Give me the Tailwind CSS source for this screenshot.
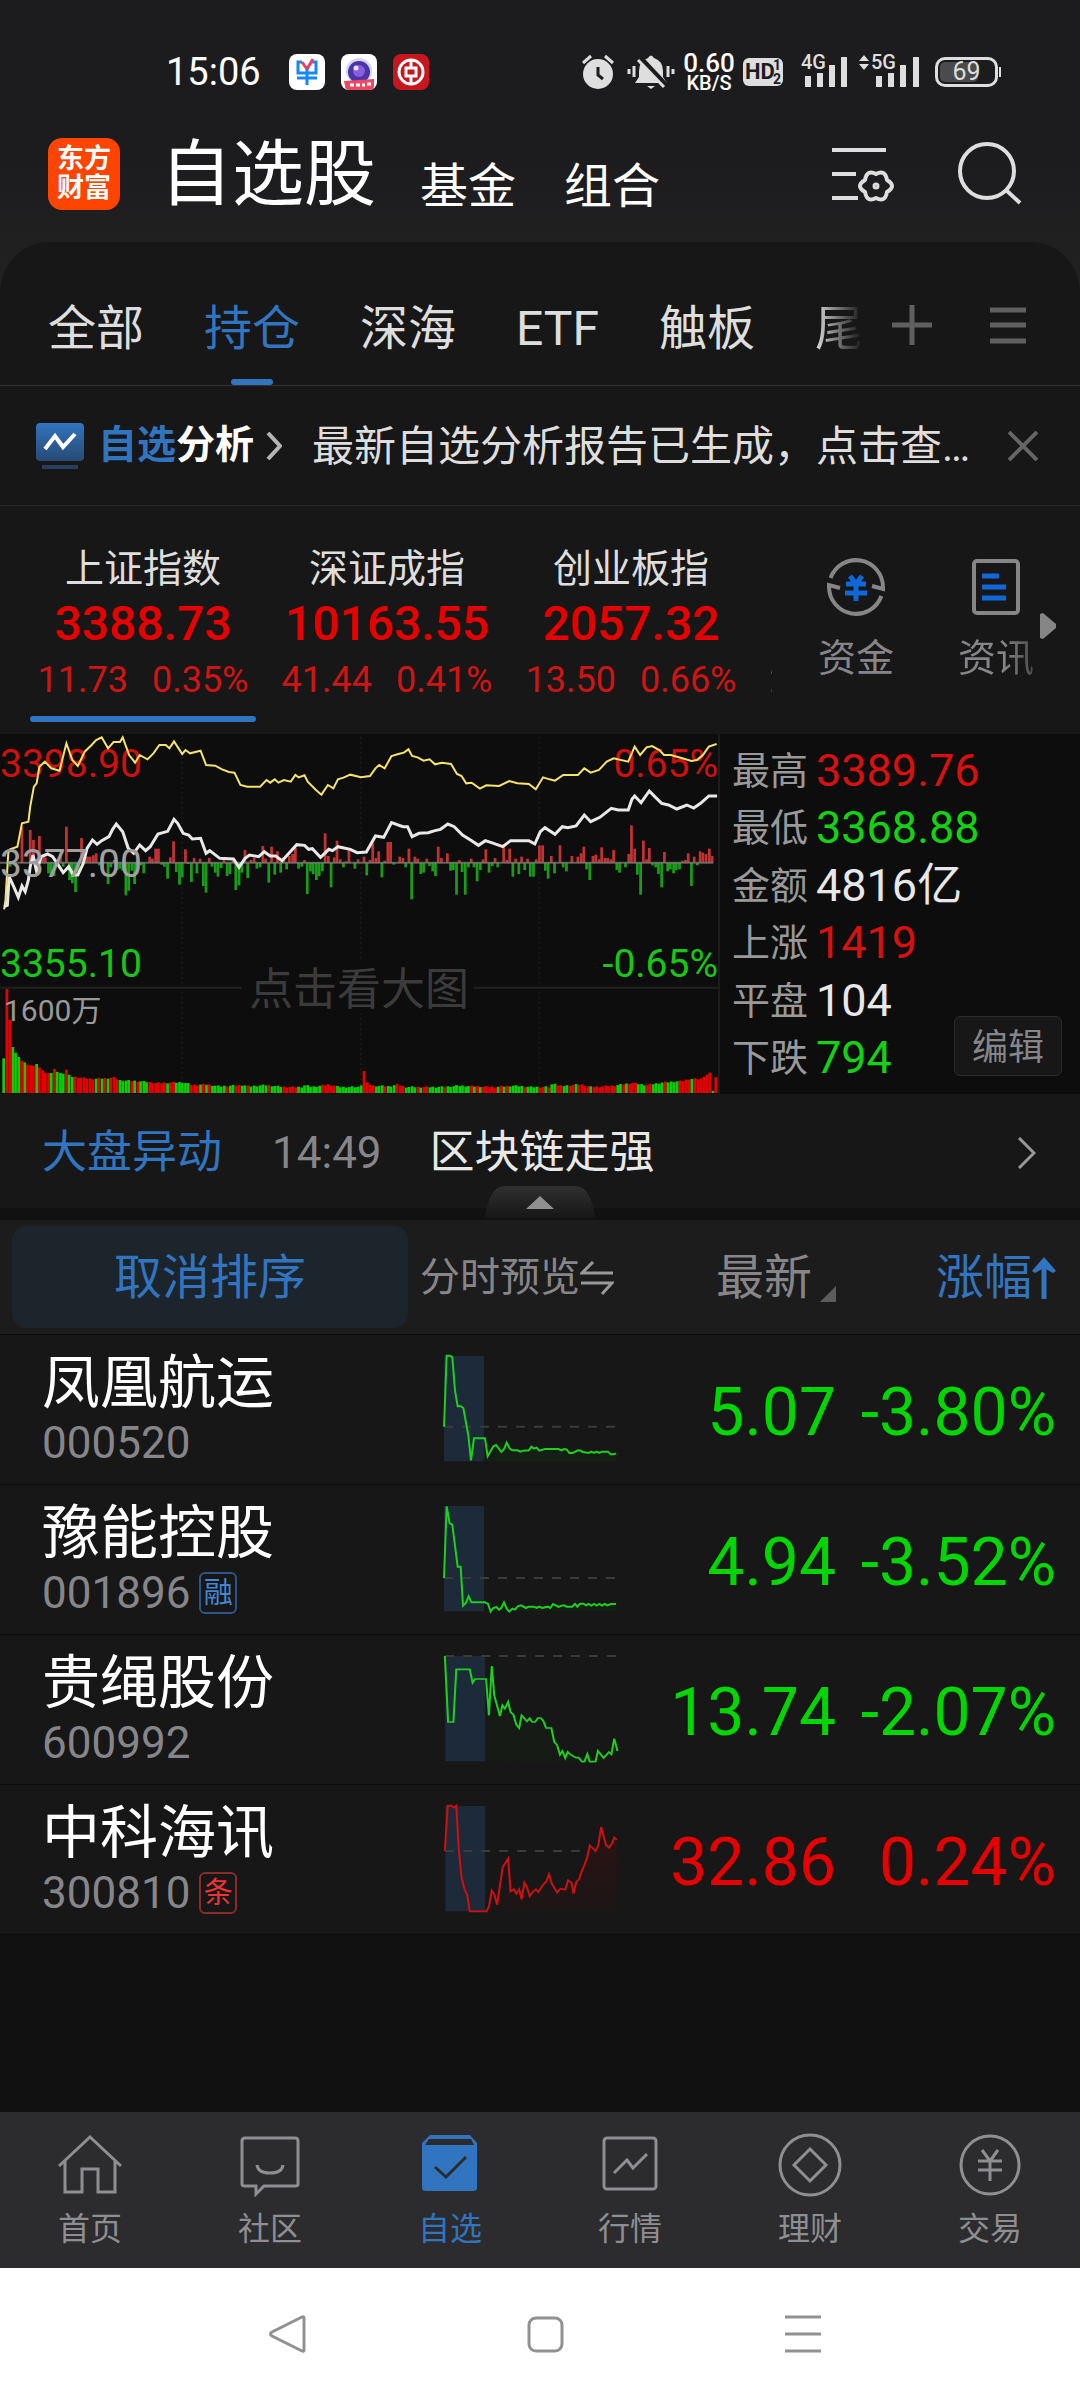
<!DOCTYPE html>
<html lang="zh-CN">
<head>
<meta charset="utf-8">
<meta name="viewport" content="width=device-width, initial-scale=1">
<title>自选股</title>
<script src="https://cdn.jsdelivr.net/npm/@tailwindcss/browser@4"></script>
</head>
<body class="flex min-h-screen flex-col bg-[#111111] font-[Roboto,'Noto_Sans_CJK_SC',sans-serif] text-[#dedede]">

<div class="bg-linear-to-b from-[#1c1c1e] from-40% to-[#262626]">
  <!-- Status bar -->
  <div class="flex h-[138px] items-center justify-between pt-1.5 pr-[82px] pl-[166px] text-white">
    <div class="flex items-center">
      <span class="text-[38px] leading-none">15:06</span>
      <div class="ml-7 flex gap-4">
        <svg class="size-9" viewBox="0 0 36 36" fill="none"><rect width="36" height="36" rx="8" fill="#fff"/><path d="M13 8H9v11h18V8h-4" stroke="#1689f0" stroke-width="3"/><path d="M13 8l5 7 6-10" stroke="#f03d62" stroke-width="3"/><path d="M8 24h20M18 15v16" stroke="#1689f0" stroke-width="3"/></svg>
        <svg class="size-9" viewBox="0 0 36 36"><rect width="36" height="36" rx="8" fill="#fff"/><circle cx="18" cy="17" r="13" fill="#d9d4ee"/><circle cx="18" cy="18" r="11" fill="#4b34a6"/><circle cx="18" cy="17" r="6" fill="#8a5de0"/><circle cx="15" cy="14" r="2.500" fill="#e8dcff"/><path d="M3 27l30-2v7q0 4-4 4H8q-4 0-4-4z" fill="#ee4761"/><path d="M9 31h4m2 0h4m2 0h3m2-1h4" stroke="#fff" stroke-width="3"/></svg>
        <svg class="size-9" viewBox="0 0 36 36" fill="none"><rect width="36" height="36" rx="8" fill="#c8161f"/><circle cx="18" cy="18" r="12" stroke="#fff" stroke-width="3"/><rect x="13" y="14" width="10" height="8" stroke="#fff" stroke-width="3"/><path d="M18 6v8m0 8v8" stroke="#fff" stroke-width="3"/></svg>
      </div>
    </div>
    <div class="flex items-center text-[#dedede]">
      <svg class="h-9 w-[34px]" viewBox="0 0 34 36" fill="none"><circle cx="17" cy="20" r="15" fill="#dedede"/><path d="M2 9l8-7M32 9l-8-7" stroke="#dedede" stroke-width="3"/><path d="M17 13v8l5 4" stroke="#1c1c1e" stroke-width="3"/></svg>
      <svg class="ml-3 h-9 w-12" viewBox="0 0 48 36" fill="none"><path d="M21 4q3-5 6 0q9 3 9 13v6l4 6H8l4-6v-6q0-10 9-13z" fill="#dedede"/><path d="M20 32h8l-4 3z" fill="#dedede"/><path d="M12 3l28 30" stroke="#1c1c1e" stroke-width="6"/><path d="M11 6l26 27" stroke="#dedede" stroke-width="3"/><path d="M2 15v5M7 12v11M41 12v11M46 15v5" stroke="#dedede" stroke-width="3"/></svg>
      <div class="ml-2 flex w-[52px] flex-col items-center font-medium text-white"><span class="text-[26px] leading-[22px]">0.60</span><span class="text-[20px] leading-[18px]">KB/S</span></div>
      <div class="relative ml-2 h-7 w-10 rounded-md bg-[#dedede] pl-0.5 text-[22px] leading-7 font-bold text-[#1c1c1e]">HD<span class="absolute top-0 right-0.5 text-[14px] leading-[15px]">1</span><span class="absolute right-0.5 bottom-0 text-[14px] leading-[14px]">2</span></div>
      <div class="relative ml-[18px] h-9 w-[46px]"><span class="absolute top-0 left-0 text-[20px] leading-4 font-medium">4G</span><svg class="size-full" viewBox="0 0 46 36"><path d="M4 22h6v11H4zM16 19h6v14h-6zM28 11h6v22h-6zM40 3h6v30h-6z" fill="#dedede"/></svg></div>
      <div class="relative ml-3 h-9 w-[60px]"><span class="absolute top-0 left-3 text-[20px] leading-4 font-medium">5G</span><svg class="size-full" viewBox="0 0 60 36"><path d="M0 7l5-6 5 6zM0 10l5 6 5-6zM17 22h6v11h-6zM29 19h6v14h-6zM41 11h6v22h-6zM54 3h6v30h-6z" fill="#dedede"/></svg></div>
      <div class="relative ml-4 h-[30px] w-[63px] rounded-[10px] border-3 border-[#dedede] p-0.5"><div class="h-full w-[38px] rounded-[5px] bg-[#4b4b4d]"></div><span class="absolute inset-0 text-center text-[25px] leading-6">69</span><span class="absolute top-[7px] -right-1.5 h-2.5 w-0.5 bg-[#dedede]"></span></div>
    </div>
  </div>

  <!-- App header -->
  <header class="flex h-[104px] items-end justify-between pr-[58px] pb-8 pl-12">
    <div class="flex items-end text-white">
      <div class="flex size-[72px] flex-col items-center justify-center rounded-[14px] bg-[#ff4400] text-[27px] leading-[29px] font-bold"><span>东方</span><span>财富</span></div>
      <h1 class="ml-10 text-[72px] leading-[70px]">自选股</h1>
      <a href="#" class="ml-11 text-[48px] leading-[46px]">基金</a>
      <a href="#" class="ml-12 text-[48px] leading-[46px]">组合</a>
    </div>
    <div class="flex gap-16">
      <button aria-label="设置"><svg class="h-[72px] w-16" viewBox="0 0 64 72" fill="none" stroke="#dedede" stroke-width="4"><path d="M2 12h54M2 36h24M2 60h26"/><path d="M57 54Q55 65 46 60Q37 65 35 54Q25 48 35 42Q37 31 46 36Q55 31 57 42Q67 48 57 54Z" stroke-linejoin="round"/><circle cx="46" cy="48" r="1.500"/></svg></button>
      <button aria-label="搜索"><svg class="h-[72px] w-16" viewBox="0 0 64 72" fill="none" stroke="#dedede" stroke-width="4"><circle cx="29" cy="33" r="27"/><path d="M48 52l14 13"/></svg></button>
    </div>
  </header>

  <!-- Group tabs -->
  <nav class="flex h-36 items-end justify-between rounded-t-[50px] border-b border-[#303030] bg-[#171717] pr-[52px] pl-12 text-[48px] leading-[48px]">
    <div class="flex gap-[60px]">
      <a href="#" class="pb-8">全部</a>
      <a href="#" class="relative pb-8 text-[#3174bf]">持仓<span class="absolute bottom-0 left-1/2 h-1.5 w-[42px] -translate-x-1/2 rounded-full bg-[#3174bf]"></span></a>
      <a href="#" class="pb-8">深海</a>
      <a href="#" class="pb-8">ETF</a>
      <a href="#" class="pb-8">触板</a>
      <a href="#" class="bg-linear-to-r from-[#dedede] to-[#171717] bg-clip-text pb-8 text-transparent">尾</a>
    </div>
    <div class="flex gap-14 pb-10">
      <button aria-label="添加"><svg class="size-10" viewBox="0 0 40 40" stroke="#606060" stroke-width="5"><path d="M0 20h40M20 0v40"/></svg></button>
      <button aria-label="管理分组"><svg class="size-10" viewBox="0 0 40 40" stroke="#606060" stroke-width="5"><path d="M2 5h36M2 20h36M2 36h36"/></svg></button>
    </div>
  </nav>
</div>

<!-- Report notice -->
<section class="flex h-[120px] items-center border-b border-[#262626] bg-[#171717] pr-[42px] pl-9">
  <svg class="h-[46px] w-12 shrink-0" viewBox="0 0 48 46" fill="none"><defs><linearGradient id="ng" x2="0" y2="1"><stop offset="0" stop-color="#3174bf"/><stop offset="1" stop-color="#274a75"/></linearGradient></defs><rect width="48" height="38" rx="4" fill="url(#ng)"/><path d="M9 26l10-13 8 11 12-13" stroke="#fff" stroke-width="4"/><path d="M6 44h36" stroke="#263f5e" stroke-width="4"/></svg>
  <a href="#" class="ml-3.5 flex shrink-0 items-center text-[39px] leading-none font-bold"><span class="text-[#3174bf]">自选</span><span class="text-white">分析</span>
    <svg class="ml-3 h-7 w-4" viewBox="0 0 16 28" fill="none" stroke="#b5b5b5" stroke-width="4"><path d="M2 1l12 13L2 27"/></svg></a>
  <p class="ml-[30px] min-w-0 flex-1 truncate pt-0.5 text-[42px] leading-[50px]">最新自选分析报告已生成，点击查看</p>
  <button aria-label="关闭" class="ml-9"><svg class="size-[30px]" viewBox="0 0 30 30" stroke="#666" stroke-width="4"><path d="M1 1l28 28M29 1L1 29"/></svg></button>
</section>

<!-- Market indices -->
<section class="relative flex h-[228px] bg-[#171717] pl-[21px]">
  <div class="flex min-w-0 flex-1 overflow-hidden pt-11 text-center text-[#e60000]">
    <a href="#" class="flex w-[244px] shrink-0 flex-col items-center"><span class="text-[39px] leading-[38px] text-[#dedede]">上证指数</span><b class="mt-3 text-[48px] leading-[48px] font-medium">3388.73</b><span class="mt-3.5 flex gap-6 text-[36px] leading-9 text-[#d01414]"><i class="not-italic">11.73</i><i class="not-italic">0.35%</i></span><span class="mt-[18px] h-1.5 w-[226px] rounded-full bg-[#3174bf]"></span></a>
    <a href="#" class="flex w-[244px] shrink-0 flex-col items-center"><span class="text-[39px] leading-[38px] text-[#dedede]">深证成指</span><b class="mt-3 text-[48px] leading-[48px] font-medium">10163.55</b><span class="mt-3.5 flex gap-6 text-[36px] leading-9 text-[#d01414]"><i class="not-italic">41.44</i><i class="not-italic">0.41%</i></span></a>
    <a href="#" class="flex w-[244px] shrink-0 flex-col items-center"><span class="text-[39px] leading-[38px] text-[#dedede]">创业板指</span><b class="mt-3 text-[48px] leading-[48px] font-medium">2057.32</b><span class="mt-3.5 flex gap-6 text-[36px] leading-9 text-[#d01414]"><i class="not-italic">13.50</i><i class="not-italic">0.66%</i></span></a>
    <a href="#" class="flex w-[244px] shrink-0 flex-col items-start pt-28 pl-4 text-[36px] leading-9 text-[#d01414]">2</a>
  </div>
  <div class="ml-3.5 flex w-[294px] shrink-0 pt-[51px] text-[38px] leading-[38px] text-[#86868a]">
    <a href="#" class="flex w-[140px] flex-col items-center gap-[22px]"><svg class="size-[60px]" viewBox="0 0 60 60" fill="none" stroke="#868686" stroke-width="4"><path d="M4.600 21A27 27 0 0 1 57 30V32L46 29M55.400 39A27 27 0 0 1 3 30V28L14 31"/><path d="M24 19l6 8 6-8M20 27h20M19 36h22M30 27v17" stroke="#1068d8" stroke-width="5"/></svg>资金</a>
    <a href="#" class="flex w-[140px] flex-col items-center gap-[22px]"><svg class="size-[60px]" viewBox="0 0 60 60" fill="none" stroke="#868686" stroke-width="4"><rect x="8" y="4" width="44" height="52" rx="3"/><path d="M16 19h17M16 30h24M16 41h24" stroke="#1068d8" stroke-width="5"/></svg><span class="bg-linear-to-r from-[#86868a] from-60% to-[#4a4a4a] bg-clip-text text-transparent">资讯</span></a>
  </div>
  <svg class="absolute top-[107px] right-6 h-[26px] w-4" viewBox="0 0 16 26" fill="#868686"><path d="M0 1l3-1 13 11v4L3 26l-3-1z"/></svg>
</section>

<!-- Intraday chart -->
<section class="flex h-[360px] bg-[#0d0d0d]">
  <a href="#" aria-label="点击看大图" class="relative min-w-0 flex-1 border-r-2 border-[#1c1c1c] text-[39px] leading-[39px]">
    <span class="absolute top-[11px] left-0 text-[#d01010]">3398.90</span>
    <span class="absolute top-[11px] right-0 text-[#d01010]">0.65%</span>
    <svg id="chart" class="absolute inset-0 size-full" viewBox="0 42 1568 1080" preserveAspectRatio="none" fill="none">
      <g stroke="#1a1a1a" stroke-width="2" stroke-dasharray="2 3"><path d="M398 50V1120M788 50V720M788 880V1120M1178 50V1120" vector-effect="non-scaling-stroke"/></g>
      <path d="M0 803H528M1035 803H1568" stroke="#202020" stroke-width="2" vector-effect="non-scaling-stroke"/>
      <g id="momentum"></g>
      <path d="M0 428H1558" stroke="#838383" stroke-width="2" stroke-opacity=".7" vector-effect="non-scaling-stroke"/>
      <g id="volume"></g>
      <polyline vector-effect="non-scaling-stroke" stroke="#f5e36c" stroke-width="2" points="9,568 12,540 18,400 22,388 38,380 48,310 62,305 66,260 74,200 80,190 86,140 98,125 112,145 130,152 145,70 158,120 170,138 185,95 200,75 210,60 222,52 236,85 248,66 262,66 268,52 282,105 295,128 305,105 322,118 335,100 348,75 362,75 370,85 380,64 398,102 405,90 415,100 438,92 450,135 470,137 485,148 500,156 512,158 525,195 540,200 568,200 582,180 590,188 600,178 608,188 620,180 635,185 645,165 652,172 665,166 672,185 690,210 702,224 716,195 728,205 738,178 750,173 765,164 788,172 808,168 820,145 828,135 840,145 855,108 870,102 882,98 892,88 900,108 912,112 925,122 938,118 950,133 965,128 985,132 998,162 1008,168 1018,190 1030,188 1048,206 1062,196 1090,198 1112,183 1130,190 1155,192 1170,208 1186,172 1200,178 1212,182 1230,165 1262,165 1276,145 1290,158 1308,150 1325,125 1340,115 1372,125 1386,80 1398,105 1412,82 1424,78 1440,90 1450,105 1465,105 1490,115 1510,123 1522,120 1535,105 1548,80 1565,72"/>
      <polyline vector-effect="non-scaling-stroke" stroke="#e8e8e8" stroke-width="3" points="9,560 16,556 20,470 30,500 40,532 48,498 55,515 62,480 66,440 72,405 80,455 90,410 104,402 115,410 125,430 138,458 150,440 160,465 170,465 182,430 190,385 202,360 212,373 222,362 238,350 246,328 254,312 268,335 280,385 292,400 305,375 318,392 328,380 345,342 366,334 380,298 388,310 400,340 412,345 420,357 438,355 450,400 458,392 480,415 510,417 522,442 535,415 545,405 565,410 577,395 590,408 602,408 616,422 632,398 648,374 665,376 674,388 682,386 700,412 718,388 726,392 738,380 765,388 780,398 800,396 820,348 838,352 855,308 880,320 890,320 900,350 915,340 935,338 950,332 962,328 978,312 992,320 1010,345 1030,362 1045,376 1060,362 1078,370 1098,380 1115,362 1155,362 1168,372 1180,335 1190,323 1212,343 1228,320 1240,323 1258,318 1276,285 1290,305 1310,292 1335,265 1350,270 1372,270 1380,238 1386,228 1400,248 1418,213 1430,230 1445,250 1460,255 1478,267 1500,255 1515,264 1530,250 1548,228 1566,228"/>
    </svg>
    <span class="absolute top-[111px] left-0 text-[#a0a0a0]">3377.00</span>
    <span class="absolute top-[211px] left-0 text-[#16c816]">3355.10</span>
    <span class="absolute top-[211px] right-0 text-[#16c816]">-0.65%</span>
    <span class="absolute top-[262px] left-1 text-[30px] leading-[30px] text-[#999]">1600万</span>
    <span class="absolute top-[234px] left-1/2 -translate-x-1/2 text-[44px] leading-[44px] whitespace-nowrap text-[#3b3b3b]">点击看大图</span>
  </a>
  <div class="relative w-[360px] shrink-0">
    <dl class="grid h-full grid-cols-[76px_1fr] grid-rows-6 items-center gap-x-2 pt-2 pb-[7px] pl-3 text-[45px] leading-[44px]">
      <dt class="text-[38px] text-[#999]">最高</dt><dd class="text-[#d81010]">3389.76</dd>
      <dt class="text-[38px] text-[#999]">最低</dt><dd class="text-[#12d212]">3368.88</dd>
      <dt class="text-[38px] text-[#999]">金额</dt><dd class="text-[#e8e8e8]">4816亿</dd>
      <dt class="text-[38px] text-[#999]">上涨</dt><dd class="text-[#d81010]">1419</dd>
      <dt class="text-[38px] text-[#999]">平盘</dt><dd class="text-[#e8e8e8]">104</dd>
      <dt class="text-[38px] text-[#999]">下跌</dt><dd class="text-[#12d212]">794</dd>
    </dl>
    <button class="absolute right-[18px] bottom-[18px] h-[60px] w-[108px] rounded-md border border-[#2b2b2b] bg-[#171717] pt-1 text-[36px] leading-9 text-[#86868a]">编辑</button>
  </div>
</section>

<!-- Market movement news -->
<section class="relative h-[126px] border-b-12 border-[#111] bg-[#171717]">
  <a href="#" class="flex h-[114px] items-center pt-1 pr-11 pl-[42px] text-[45px] leading-[44px]">
    <span class="text-[#3174bf]">大盘异动</span><time class="ml-[50px] text-[44px] text-[#86868a]">14:49</time><span class="ml-12 text-[#e8e8e8]">区块链走强</span>
    <svg class="ml-auto h-8 w-[18px]" viewBox="0 0 18 32" fill="none" stroke="#999" stroke-width="3"><path d="M1 1l15 15L1 31"/></svg>
  </a>
  <button aria-label="收起" class="absolute top-[92px] left-1/2 -translate-x-1/2"><svg class="h-8 w-[110px]" viewBox="0 0 110 32"><defs><linearGradient id="tg" x2="0" y2="1"><stop offset="0" stop-color="#303030"/><stop offset="1" stop-color="#171717"/></linearGradient></defs><path d="M0 32Q4 0 20 0H90Q106 0 110 32z" fill="url(#tg)"/><path d="M55 10l14 13H41z" fill="#909090"/></svg></button>
</section>

<!-- Watchlist -->
<table class="w-full table-fixed border-collapse bg-[#171717]">
  <colgroup><col class="w-[410px]"><col class="w-[214px]"><col><col class="w-[244px]"></colgroup>
  <thead>
    <tr class="h-[114px] border-b border-[#0c0c0c] bg-[#1c1c1c] text-[48px] leading-[48px] text-[#86868a]">
      <th class="p-0 pl-3 font-normal"><button class="block h-[102px] w-[396px] rounded-[14px] bg-[#1c242c] pt-0.5 text-[#3174bf]">取消排序</button></th>
      <th class="p-0 pl-2.5 font-normal"><button class="flex items-center pt-0.5 text-[40px] leading-10 whitespace-nowrap">分时预览<svg class="h-[34px] w-[34px] shrink-0" viewBox="0 0 34 34" fill="none" stroke="#999" stroke-width="3"><path d="M13 1L2 12H33M1 22H32L22 33"/></svg></button></th>
      <th class="p-0 font-normal"><button class="ml-auto flex items-end gap-2 pt-0.5">最新<svg class="size-4" viewBox="0 0 16 16"><path d="M16 0v16H0z" fill="#5c5c5e"/></svg></button></th>
      <th class="p-0 pr-6 font-normal"><button class="ml-auto flex items-center pt-0.5 text-[#3174bf]">涨幅<svg class="h-[42px] w-6" viewBox="0 0 24 42" fill="none"><path d="M12 6v36" stroke="#3174bf" stroke-width="5"/><path d="M12 0l12 14-3 2-9-5-9 5-3-2z" fill="#3174bf"/></svg></button></th>
    </tr>
  </thead>
  <tbody class="text-right text-[66px] leading-[64px] text-[#00d600]">
    <tr class="h-[150px] border-b border-[#0c0c0c]">
      <td class="p-0 pl-[42px] text-left"><a href="#" class="block text-[58px] leading-[68px] text-white">凤凰航运</a><span class="flex h-[52px] items-center text-[44px] leading-[44px] text-[#86868a]">000520</span></td>
      <td class="p-0 pl-8"><svg class="h-[110px] w-[180px]" viewBox="126 76 540 330" fill="none"><path d="M132 82h120v316H132z" fill="#1c2a3a"/><path d="M132 294H646" stroke="#3b3b3b" stroke-width="6" stroke-dasharray="27 27"/><path d="M252 398V330l10 53 22-32 36-10 14 24H500l12 9 30-8 106 10v22z" fill="#161f16"/><polyline stroke="#1ed01e" stroke-width="6" points="132,294 140,81 150,81 157,86 165,185 173,233 183,233 190,238 205,320 213,395 222,329 255,329 263,383 280,353 288,349 304,370 313,360 320,342 329,360 337,365 353,365 361,369 370,366 387,365 394,354 402,360 410,357 418,366 435,361 476,361 484,365 492,361 500,362 508,373 518,373 534,365 543,366 548,370 566,373 574,369 582,373 590,369 598,373 606,369 624,369 632,377 642,377 648,374"/></svg></td>
      <td class="p-0 pt-2">5.07</td><td class="p-0 pt-2 pr-6">-3.80%</td>
    </tr>
    <tr class="h-[150px] border-b border-[#0c0c0c]">
      <td class="p-0 pl-[42px] text-left"><a href="#" class="block text-[58px] leading-[68px] text-white">豫能控股</a><span class="flex h-[52px] items-center gap-[9px] text-[44px] leading-[44px] text-[#86868a]">001896<span class="flex h-[42px] w-[38px] items-center justify-center rounded-md border-2 border-[#2d5584] text-[29px] leading-7 text-[#4586d0]">融</span></span></td>
      <td class="p-0 pl-8"><svg class="h-[110px] w-[180px]" viewBox="126 526 540 330" fill="none"><path d="M132 532h120v316H132z" fill="#1c2a3a"/><path d="M132 748H646" stroke="#3b3b3b" stroke-width="6" stroke-dasharray="27 27"/><path d="M270 848l90-16h288v16z" fill="#161f16"/><polyline stroke="#1ed01e" stroke-width="6" points="132,748 140,533 149,584 157,588 173,714 182,714 189,831 198,822 206,803 214,821 255,821 264,826 272,849 280,838 289,835 297,843 304,838 312,821 320,840 328,849 337,840 345,843 353,833 363,830 378,838 386,834 402,834 410,838 418,834 427,838 443,834 451,838 459,826 476,835 484,831 492,830 500,834 516,834 525,826 532,834 540,825 550,825 558,830 566,826 574,831 582,826 590,831 598,826 606,831 614,826 622,830 632,826 648,826"/></svg></td>
      <td class="p-0 pt-2">4.94</td><td class="p-0 pt-2 pr-6">-3.52%</td>
    </tr>
    <tr class="h-[150px] border-b border-[#0c0c0c]">
      <td class="p-0 pl-[42px] text-left"><a href="#" class="block text-[58px] leading-[68px] text-white">贵绳股份</a><span class="flex h-[52px] items-center text-[44px] leading-[44px] text-[#86868a]">600992</span></td>
      <td class="p-0 pl-8"><svg class="h-[110px] w-[180px]" viewBox="1080 76 441 330" preserveAspectRatio="none" fill="none"><path d="M1088 82h98v316h-98z" fill="#1c2a3a"/><path d="M1088 82H1508" stroke="#3b3b3b" stroke-width="6" stroke-dasharray="22 22"/><path d="M1188 398V240l32 20 22-20 30 50 60-15 20 40 20 60 40 20h90v5z" fill="#161b16"/><polyline stroke="#1ed01e" stroke-width="5" points="1087,82 1095,280 1108,280 1115,122 1148,122 1155,162 1161,151 1188,151 1195,260 1202,112 1208,200 1222,262 1228,230 1234,240 1242,220 1248,250 1255,258 1262,288 1269,298 1275,260 1288,278 1295,269 1301,280 1308,280 1315,268 1322,268 1328,276 1335,298 1348,298 1355,340 1362,349 1369,378 1375,367 1382,388 1388,370 1395,378 1408,387 1415,387 1423,399 1429,399 1436,376 1442,399 1456,399 1462,367 1476,388 1489,370 1495,377 1502,330 1510,367"/></svg></td>
      <td class="p-0 pt-2">13.74</td><td class="p-0 pt-2 pr-6">-2.07%</td>
    </tr>
    <tr class="h-[150px] border-b border-[#0c0c0c] text-[#e60000]">
      <td class="p-0 pl-[42px] text-left"><a href="#" class="block text-[58px] leading-[68px] text-white">中科海讯</a><span class="flex h-[52px] items-center gap-[9px] text-[44px] leading-[44px] text-[#86868a]">300810<span class="flex h-[42px] w-[38px] items-center justify-center rounded-md border-2 border-[#8a2b2b] text-[29px] leading-7 text-[#e33]">条</span></span></td>
      <td class="p-0 pl-8"><svg class="h-[110px] w-[180px]" viewBox="1080 526 441 330" preserveAspectRatio="none" fill="none"><defs><linearGradient id="rg" x2="0" y2="1"><stop offset="0" stop-color="#2a1314"/><stop offset="1" stop-color="#1b1616"/></linearGradient></defs><path d="M1088 532h98v316h-98z" fill="#1c2a3a"/><path d="M1088 667H1508" stroke="#3b3b3b" stroke-width="6" stroke-dasharray="22 22"/><path d="M1190 848l50-60h160l42-130h28l38-25v215z" fill="url(#rg)"/><polyline stroke="#d01010" stroke-width="5" points="1087,667 1094,531 1103,531 1109,537 1115,531 1121,660 1128,748 1135,780 1142,800 1148,848 1189,848 1195,833 1202,786 1208,796 1215,828 1222,770 1229,715 1242,690 1248,788 1256,782 1262,795 1269,782 1275,812 1282,762 1288,775 1295,802 1302,790 1310,782 1316,790 1328,768 1336,758 1342,737 1349,765 1362,792 1370,780 1382,783 1389,755 1397,762 1402,795 1409,760 1416,752 1423,725 1429,710 1436,685 1442,650 1456,667 1463,650 1470,595 1482,650 1489,657 1496,645 1502,627 1508,633"/></svg></td>
      <td class="p-0 pt-2">32.86</td><td class="p-0 pt-2 pr-6">0.24%</td>
    </tr>
  </tbody>
</table>

<!-- Bottom navigation -->
<nav class="mt-auto grid h-[156px] grid-cols-6 bg-[#2c2c2e] pt-[21px] text-[32px] leading-8 text-[#8e8e93]">
  <a href="#" class="flex flex-col items-center gap-4"><svg class="size-16" viewBox="0 0 64 64" fill="none" stroke="currentColor" stroke-width="3"><path d="M1 33L32 4l31 29M7 28v31h17V36h16v23h17V28"/></svg>首页</a>
  <a href="#" class="flex flex-col items-center gap-4"><svg class="size-16" viewBox="0 0 64 64" fill="none" stroke="currentColor" stroke-width="3"><path d="M7 5h50q3 0 3 3v43q0 2-3 2H26l-8 8v-8H7q-3 0-3-2V8q0-3 3-3zM19 32q1 8 13 8t13-8"/></svg>社区</a>
  <a href="#" class="flex flex-col items-center gap-4 text-[#3174bf]"><svg class="size-16" viewBox="0 0 64 64" fill="none"><path d="M12 2h40l7 8v45q0 3-4 3H8q-4 0-4-3V10z" fill="#3174bf"/><path d="M11 6h42l3 6H7z" fill="#2c2c2e"/><path d="M17 34l11 10 20-20" stroke="#2c2c2e" stroke-width="3"/></svg>自选</a>
  <a href="#" class="flex flex-col items-center gap-4"><svg class="size-16" viewBox="0 0 64 64" fill="none" stroke="currentColor" stroke-width="3"><rect x="6" y="5" width="52" height="51" rx="3"/><path d="M16 40l13-13 6 8 14-14"/></svg>行情</a>
  <a href="#" class="flex flex-col items-center gap-4"><svg class="size-16" viewBox="0 0 64 64" fill="none" stroke="currentColor" stroke-width="3"><circle cx="32" cy="32" r="30"/><path d="M32 16l16 16-16 16-16-16z"/></svg>理财</a>
  <a href="#" class="flex flex-col items-center gap-4"><svg class="size-16" viewBox="0 0 64 64" fill="none" stroke="currentColor" stroke-width="3"><circle cx="32" cy="32" r="29"/><path d="M24 17l8 11 8-11M20 28h24M20 37h24M32 28v20"/></svg>交易</a>
</nav>

<!-- System navigation -->
<div class="flex h-[132px] items-center justify-center gap-[220px] bg-white pl-2.5">
  <button aria-label="返回"><svg class="size-[38px]" viewBox="0 0 38 38" fill="none" stroke="#919191" stroke-width="3"><path d="M34 2q2-1 2 1v32q0 2-2 1L4 21q-3-2 0-4z"/></svg></button>
  <button aria-label="主屏幕"><svg class="size-[38px]" viewBox="0 0 38 38" fill="none" stroke="#919191" stroke-width="3"><rect x="3" y="3" width="33" height="33" rx="7"/></svg></button>
  <button aria-label="最近任务"><svg class="size-[38px]" viewBox="0 0 38 38" fill="none" stroke="#919191" stroke-width="3"><path d="M1 2h36M1 19h36M1 36h36"/></svg></button>
</div>

<script>
const NS = 'http://www.w3.org/2000/svg';
function bar(group, x, y, w, h, color) {
  const r = document.createElementNS(NS, 'rect');
  Object.entries({ x, y, width: w, height: h, fill: color }).forEach(([k, v]) => r.setAttribute(k, v));
  group.appendChild(r);
}

// Momentum around the previous close: [x, value]
const momentum = [[22,-12],[34,-10],[48,108],[66,98],[73,68],[80,12],[86,80],[93,20],[99,16],[106,-32],[112,-38],[118,-40],[125,-10],[132,28],[138,-12],[145,108],[152,-52],[158,-62],[165,-88],[171,-28],[178,74],[184,14],[191,18],[197,18],[204,22],[210,28],[217,-8],[223,-12],[236,-64],[242,-14],[249,8],[256,-22],[262,-18],[268,-24],[275,-98],[281,-84],[288,-24],[294,-64],[301,-12],[308,-8],[314,-32],[327,18],[333,12],[340,42],[346,42],[353,-6],[359,-12],[366,-48],[372,16],[379,64],[385,-28],[392,-66],[398,-44],[405,40],[411,-4],[418,-58],[424,14],[430,-32],[437,12],[444,-70],[450,-90],[457,14],[463,-12],[470,-30],[476,-42],[483,-16],[489,10],[496,-40],[502,-34],[509,12],[515,-82],[522,-68],[528,-30],[535,38],[541,-46],[548,8],[555,14],[561,-18],[568,-14],[574,50],[580,12],[587,-60],[593,48],[600,-36],[606,34],[613,-30],[619,16],[626,-20],[632,20],[639,26],[645,44],[652,-18],[659,-12],[665,8],[671,-94],[678,-26],[684,-34],[691,-52],[697,-40],[704,-26],[710,88],[717,20],[723,-74],[730,16],[736,66],[743,10],[750,-14],[756,4],[762,44],[775,-18],[782,10],[795,18],[801,-38],[808,8],[814,58],[821,14],[827,34],[834,-44],[840,6],[847,62],[853,62],[860,-6],[873,18],[880,14],[886,-14],[893,42],[899,-110],[906,18],[912,12],[919,-34],[925,-30],[932,12],[938,-10],[945,-26],[951,-40],[957,48],[964,14],[977,28],[984,-24],[990,-22],[997,-96],[1003,8],[1009,-28],[1016,-96],[1023,-14],[1029,12],[1035,-14],[1042,-56],[1049,-22],[1055,10],[1061,40],[1068,-30],[1075,-10],[1081,14],[1087,-14],[1100,56],[1107,8],[1113,42],[1120,-42],[1126,12],[1133,-34],[1139,18],[1146,-22],[1152,12],[1158,-42],[1165,-42],[1171,10],[1178,52],[1185,52],[1191,-24],[1197,-48],[1204,20],[1211,-32],[1223,52],[1230,-14],[1237,-26],[1249,20],[1262,18],[1269,28],[1275,48],[1281,-20],[1288,-52],[1295,20],[1301,24],[1308,10],[1314,46],[1321,14],[1327,14],[1334,10],[1340,38],[1347,-22],[1353,-30],[1366,-14],[1373,26],[1379,112],[1386,42],[1392,-36],[1399,-96],[1405,66],[1412,10],[1418,44],[1425,-8],[1432,-14],[1438,-34],[1445,-74],[1451,32],[1458,-26],[1464,-20],[1471,-32],[1477,-22],[1484,-20],[1490,6],[1497,8],[1503,28],[1510,-70],[1516,18],[1523,-8],[1529,34],[1535,30],[1542,26],[1549,42],[1555,20]];
const mg = document.getElementById('momentum');
momentum.forEach(([x, v]) => bar(mg, x - 3, v > 0 ? 428 - v : 428, 6, Math.abs(v), v > 0 ? '#c23232' : '#1a9c1a'));

// Volume envelope: [x, height], with the minutes that closed lower as x ranges
const volume = [[8,104],[15,312],[22,204],[28,138],[35,118],[41,108],[48,95],[54,92],[61,84],[74,82],[80,87],[87,75],[100,60],[112,60],[119,72],[126,62],[138,58],[145,70],[152,50],[200,42],[249,46],[262,38],[300,36],[340,30],[400,32],[420,24],[450,26],[480,20],[530,24],[545,20],[580,24],[620,18],[658,18],[667,24],[680,18],[720,26],[740,18],[788,18],[795,66],[802,30],[814,22],[850,20],[868,26],[885,18],[970,18],[1000,22],[1080,18],[1120,22],[1160,18],[1200,18],[1210,32],[1220,20],[1268,26],[1290,18],[1340,22],[1380,30],[1410,24],[1450,32],[1490,36],[1505,42],[1530,42],[1551,62],[1555,10],[1561,0],[1565,94]];
const lower = [[8,8],[28,45],[54,54],[80,80],[112,112],[124,140],[152,160],[210,212],[223,223],[237,240],[261,282],[292,296],[305,322],[365,367],[385,413],[436,438],[448,451],[462,478],[485,490],[502,512],[530,537],[548,570],[576,580],[590,612],[654,676],[680,700],[733,737],[745,791],[820,836],[850,853],[862,865],[888,906],[918,921],[940,966],[980,1024],[1036,1040],[1050,1053],[1087,1090],[1100,1103],[1113,1142],[1152,1174],[1194,1197],[1206,1216],[1230,1237],[1254,1258],[1288,1292],[1345,1358],[1366,1369],[1394,1406],[1424,1446],[1458,1480],[1508,1511],[1553,1556]];
const vg = document.getElementById('volume');
for (let i = 0; i < 240; i++) {
  const x = Math.round(8 + i * 6.508);
  let k = volume.findIndex(p => p[0] >= x);
  if (k < 1) k = k === 0 ? 1 : volume.length - 1;
  const [a, b] = [volume[k - 1], volume[k]];
  const t = Math.min(1, (x - a[0]) / (b[0] - a[0]));
  const h = a[1] + (b[1] - a[1]) * t + (i > 20 && i < 235 ? (i * 7 % 5) - 2 : 0);
  const down = lower.some(([s, e]) => x >= s - 2 && x <= e + 1);
  bar(vg, x - 3, 1119 - h, 6, h, down ? '#08cf08' : '#e60000');
}
</script>
</body>
</html>
